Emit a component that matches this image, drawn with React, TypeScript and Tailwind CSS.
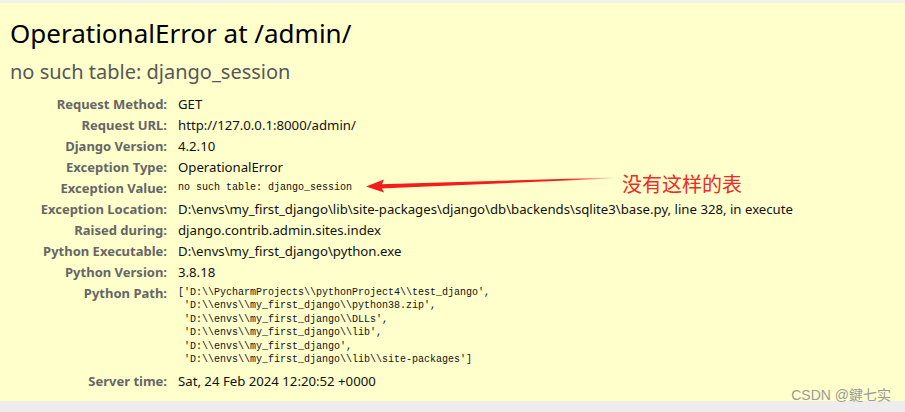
import React from "react";

const rows: { label: string; value: string; mono?: boolean }[] = [
  { label: "Request Method:", value: "GET" },
  { label: "Request URL:", value: "http://127.0.0.1:8000/admin/" },
  { label: "Django Version:", value: "4.2.10" },
  { label: "Exception Type:", value: "OperationalError" },
  { label: "Exception Value:", value: "no such table: django_session", mono: true },
  {
    label: "Exception Location:",
    value:
      "D:\\envs\\my_first_django\\lib\\site-packages\\django\\db\\backends\\sqlite3\\base.py, line 328, in execute",
  },
  { label: "Raised during:", value: "django.contrib.admin.sites.index" },
  { label: "Python Executable:", value: "D:\\envs\\my_first_django\\python.exe" },
  { label: "Python Version:", value: "3.8.18" },
];

const pythonPath = [
  "['D:\\\\PycharmProjects\\\\pythonProject4\\\\test_django',",
  " 'D:\\\\envs\\\\my_first_django\\\\python38.zip',",
  " 'D:\\\\envs\\\\my_first_django\\\\DLLs',",
  " 'D:\\\\envs\\\\my_first_django\\\\lib',",
  " 'D:\\\\envs\\\\my_first_django',",
  " 'D:\\\\envs\\\\my_first_django\\\\lib\\\\site-packages']",
];

const mono = { fontFamily: '"Liberation Mono", "Noto Sans CJK SC", monospace' };

const Row: React.FC<{ label: string; children: React.ReactNode }> = ({ label, children }) => (
  <div className="flex items-start py-[3.5px]">
    <div className="w-[168px] shrink-0 pr-[1px] text-right font-bold text-[13px] leading-[14px] text-[#666]">
      {label}
    </div>
    <div className="pl-[10px] text-[13.2px] leading-[14px] text-[#111]">{children}</div>
  </div>
);

export default function App() {
  return (
    <div
      className="w-[905px] h-[412px] flex flex-col bg-[#ededed] overflow-hidden"
      style={{ fontFamily: '"Noto Sans", "Open Sans", sans-serif' }}
    >
      <div className="h-[3px] bg-[#f0f0f0]" />
      <div className="relative h-[398px] bg-[#ffffcc] pl-[10px] pt-[12px]">
        <h1 className="text-[26px] leading-[36px] text-black font-normal">OperationalError at /admin/</h1>
        <h2 className="mt-[6px] text-[20px] leading-[30px] text-[#575757] font-normal">
          no such table: django_session
        </h2>

        <div className="mt-[6px] -ml-[10px]">
          {rows.map((r) => (
            <Row key={r.label} label={r.label}>
              {r.mono ? (
                <span className="block text-[10px] leading-[13px]" style={mono}>
                  {r.value}
                </span>
              ) : (
                r.value
              )}
            </Row>
          ))}
          <Row label="Python Path:">
            <pre className="text-[10px] leading-[13.6px] text-[#111]" style={mono}>
              {pythonPath.join("\n")}
            </pre>
          </Row>
          <Row label="Server time:">Sat, 24 Feb 2024 12:20:52 +0000</Row>
        </div>

        {/* annotation arrow */}
        <svg className="absolute left-[360px] top-[168px]" width="260" height="26" viewBox="0 0 260 26">
          <defs>
            <linearGradient id="fade" x1="0" y1="0" x2="1" y2="0">
              <stop offset="0" stopColor="#f31d1d" />
              <stop offset="0.8" stopColor="#f31d1d" />
              <stop offset="1" stopColor="#f31d1d" stopOpacity="0.1" />
            </linearGradient>
          </defs>
          <path d="M20 13.2 L252 6.4 L252 7.4 L20 17.6 Z" fill="url(#fade)" />
          <path d="M6 15.5 L24 8.5 L21 15.4 L24 21.6 Z" fill="#f31d1d" />
        </svg>
        <div
          className="absolute left-[622px] top-[167px] text-[20px] leading-[28px] text-[#f02a2a]"
          style={{ fontFamily: '"Noto Sans CJK SC", sans-serif' }}
        >
          没有这样的表
        </div>
        <div
          className="absolute right-[14px] bottom-[-4px] text-[14px] leading-[20px] text-[#9a9a9a]"
          style={{ fontFamily: '"Liberation Sans", "Noto Sans CJK SC", sans-serif' }}
        >
          CSDN @鍵七实
        </div>
      </div>
      <div className="flex-1 bg-[#ededed]" />
    </div>
  );
}
